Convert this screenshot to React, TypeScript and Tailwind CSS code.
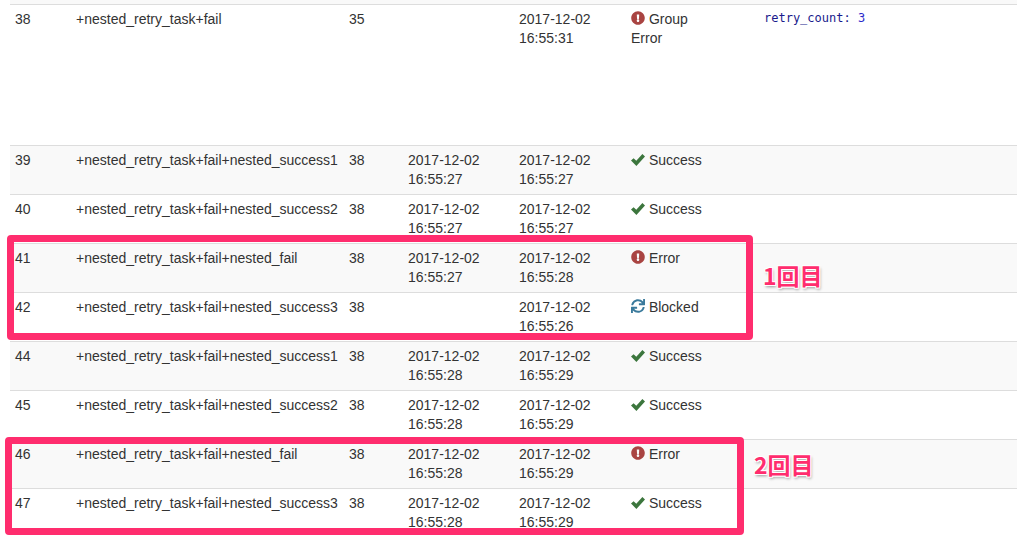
import { FaExclamationCircle, FaSync } from "react-icons/fa";

type Status = "success" | "error" | "blocked" | "group";

type Task = {
  id: number;
  name: string;
  parent: number;
  started?: string;
  updated: string;
  status: Status;
};

const tasks: Task[] = [
  { id: 39, name: "+nested_retry_task+fail+nested_success1", parent: 38, started: "2017-12-02 16:55:27", updated: "2017-12-02 16:55:27", status: "success" },
  { id: 40, name: "+nested_retry_task+fail+nested_success2", parent: 38, started: "2017-12-02 16:55:27", updated: "2017-12-02 16:55:27", status: "success" },
  { id: 41, name: "+nested_retry_task+fail+nested_fail", parent: 38, started: "2017-12-02 16:55:27", updated: "2017-12-02 16:55:28", status: "error" },
  { id: 42, name: "+nested_retry_task+fail+nested_success3", parent: 38, updated: "2017-12-02 16:55:26", status: "blocked" },
  { id: 44, name: "+nested_retry_task+fail+nested_success1", parent: 38, started: "2017-12-02 16:55:28", updated: "2017-12-02 16:55:29", status: "success" },
  { id: 45, name: "+nested_retry_task+fail+nested_success2", parent: 38, started: "2017-12-02 16:55:28", updated: "2017-12-02 16:55:29", status: "success" },
  { id: 46, name: "+nested_retry_task+fail+nested_fail", parent: 38, started: "2017-12-02 16:55:28", updated: "2017-12-02 16:55:29", status: "error" },
  { id: 47, name: "+nested_retry_task+fail+nested_success3", parent: 38, started: "2017-12-02 16:55:28", updated: "2017-12-02 16:55:29", status: "success" },
];

// glyphicon-ok style tick, FaCheck is too thin
function OkIcon() {
  return (
    <svg viewBox="0 0 14 12" className="inline-block w-[14px] h-[12px] align-[-1px] fill-[#3c763d]">
      <path d="M0 6.6 2.6 4.2 5.3 6.8 11.4 0 14 2.4 5.4 12Z" />
    </svg>
  );
}

function StatusLabel({ status }: { status: Status }) {
  if (status === "success") {
    return (
      <>
        <OkIcon /> Success
      </>
    );
  }
  if (status === "blocked") {
    return (
      <>
        <FaSync className="inline-block align-[-1px] text-[14px] text-[#3a7a9c]" /> Blocked
      </>
    );
  }
  return (
    <>
      <FaExclamationCircle className="inline-block align-[-1px] text-[14px] text-[#a94442]" />{" "}
      {status === "group" ? "Group Error" : "Error"}
    </>
  );
}

const cell = "border-t border-[#dddddd] px-[5px] pt-[5px] pb-[5px] align-top";
const note =
  "absolute font-['Noto_Sans_CJK_JP',sans-serif] font-bold text-[23px] leading-[30px] text-[#ff2d6e] [text-shadow:-1px_-1px_0_#fff,1px_-1px_0_#fff,-1px_1px_0_#fff,1px_1px_0_#fff,1px_2px_3px_rgba(0,0,0,0.4)]";

export default function App() {
  return (
    <div className="relative w-[1030px] h-[537px] overflow-hidden bg-white font-['Liberation_Sans',sans-serif] text-[14px] leading-[19px] text-[#333333]">
      <div className="pl-[10px] w-[1017px]">
        <table className="table-fixed w-[1007px] border-separate border-spacing-0">
          <colgroup>
            <col className="w-[61px]" />
            <col className="w-[273px]" />
            <col className="w-[59px]" />
            <col className="w-[111px]" />
            <col className="w-[112px]" />
            <col className="w-[95px]" />
            <col />
          </colgroup>
          <tbody>
            <tr className="bg-[#f9f9f9]">
              <td colSpan={7} className="h-[4px] p-0" />
            </tr>
            <tr>
              <td className={`${cell} h-[141px]`}>38</td>
              <td className={cell}>+nested_retry_task+fail</td>
              <td className={cell}>35</td>
              <td className={cell}></td>
              <td className={cell}>2017-12-02 16:55:31</td>
              <td className={cell}>
                <StatusLabel status="group" />
              </td>
              <td className={`${cell} pl-[43px]`}>
                <code className="block font-['DejaVu_Sans_Mono',monospace] text-[12px] leading-[16px] text-[#1a1a8c]">
                  retry_count: <span className="text-[#2a2acc]">3</span>
                </code>
              </td>
            </tr>
            {tasks.map((t, i) => (
              <tr key={t.id} className={i % 2 === 0 ? "bg-[#f9f9f9]" : "bg-white"}>
                <td className={cell}>{t.id}</td>
                <td className={`${cell} whitespace-nowrap`}>{t.name}</td>
                <td className={cell}>{t.parent}</td>
                <td className={cell}>
                  {t.started}
                  {!t.started && <span className="invisible">2017-12-02 16:55:26</span>}
                </td>
                <td className={cell}>{t.updated}</td>
                <td className={cell}>
                  <StatusLabel status={t.status} />
                </td>
                <td className={cell}></td>
              </tr>
            ))}
          </tbody>
        </table>
      </div>

      {/* hand-drawn annotations on top of the screenshot */}
      <div className="absolute left-[7px] top-[235px] w-[746px] h-[105px] border-[7px] border-[#ff2d6e] rounded-[4px]" />
      <div className="absolute left-[5px] top-[437px] w-[739px] h-[98px] border-[7px] border-[#ff2d6e] rounded-[4px]" />
      <div className={`${note} left-[763px] top-[260px]`}>1回目</div>
      <div className={`${note} left-[754px] top-[449px]`}>2回目</div>
    </div>
  );
}
